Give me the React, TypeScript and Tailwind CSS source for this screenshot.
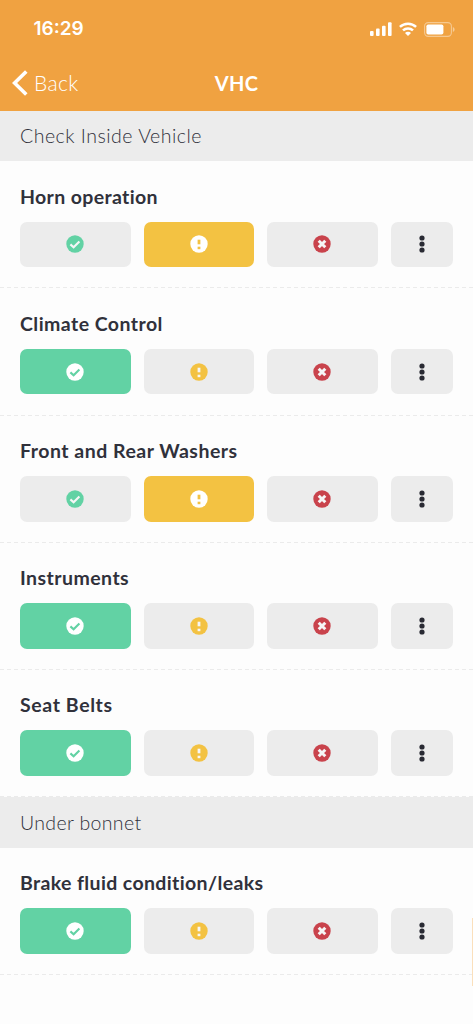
import React, { useState } from 'react';
import clsx from 'clsx';

type Status = 'ok' | 'advisory' | 'fail';

interface Check {
  name: string;
  status: Status;
  tracking: string;
}

interface Section {
  title: string;
  tracking: string;
  checks: Check[];
}

const sections: Section[] = [
  {
    title: 'Check Inside Vehicle',
    tracking: 'tracking-[0.5px]',
    checks: [
      { name: 'Horn operation', status: 'advisory', tracking: 'tracking-[0.35px]' },
      { name: 'Climate Control', status: 'ok', tracking: 'tracking-[0.45px]' },
      { name: 'Front and Rear Washers', status: 'advisory', tracking: 'tracking-[0.5px]' },
      { name: 'Instruments', status: 'ok', tracking: 'tracking-[0.45px]' },
      { name: 'Seat Belts', status: 'ok', tracking: 'tracking-[0.6px]' },
    ],
  },
  {
    title: 'Under bonnet',
    tracking: 'tracking-[0.35px]',
    checks: [{ name: 'Brake fluid condition/leaks', status: 'ok', tracking: 'tracking-[0.37px]' }],
  },
];

const options = [
  { id: 'ok' as Status, color: 'text-[#62d2a4]', active: 'bg-[#62d2a4]', mark: 'stroke-[#62d2a4]' },
  { id: 'advisory' as Status, color: 'text-[#f3c242]', active: 'bg-[#f3c242]', mark: 'stroke-[#f3c242]' },
  { id: 'fail' as Status, color: 'text-[#c9434c]', active: 'bg-[#c9434c]', mark: 'stroke-[#c9434c]' },
];

const marks: Record<Status, React.ReactNode> = {
  ok: <path d="M4.400 9.400 7.600 12.300 13.400 6.500" strokeWidth="2.1" />,
  advisory: (
    <>
      <path d="M9 4.700V9.300" strokeWidth="2.8" />
      <path d="M9 11.700V14.200" strokeWidth="2.8" />
    </>
  ),
  fail: <path d="M5.700 5.700 12.300 12.300M12.300 5.700 5.700 12.300" strokeWidth="3" />,
};

const StatusMark: React.FC<{ id: Status; className: string }> = ({ id, className }) => (
  <svg width="18" height="18" viewBox="0 0 18 18" fill="none">
    <circle cx="9" cy="9" r="8.7" fill="currentColor" />
    <g className={className}>{marks[id]}</g>
  </svg>
);

const StatusIcons: React.FC = () => (
  <div className="flex items-center gap-[7px] text-white">
    <svg width="22" height="14" viewBox="0 0 22 14" fill="currentColor">
      <rect x="0" y="9" width="3.6" height="5" rx="1" />
      <rect x="6" y="6.5" width="3.6" height="7.5" rx="1" />
      <rect x="12" y="3.7" width="3.6" height="10.3" rx="1" />
      <rect x="18" y="0.3" width="3.6" height="13.7" rx="1" />
    </svg>
    <svg width="18" height="14" viewBox="0 0 18 14" fill="none" stroke="currentColor" strokeWidth="2.5">
      <path d="M0.9 4.9a11.8 11.8 0 0 1 16.2 0" />
      <path d="M4 8.4a7.3 7.3 0 0 1 10 0" />
      <path d="M9 13.9 6 10.9a4.200 4.200 0 0 1 6 0Z" fill="currentColor" stroke="none" />
    </svg>
    <svg width="31" height="15" viewBox="0 0 31 15">
      <rect x="0.6" y="0.6" width="26.8" height="13.8" rx="3.6" fill="none" stroke="currentColor" strokeOpacity="0.42" strokeWidth="1.1" />
      <rect x="2.4" y="2.5" width="17" height="10" rx="1.8" fill="currentColor" />
      <path d="M28.9 5v5c1-.4 1.7-1.4 1.7-2.5S29.900 5.400 28.900 5Z" fill="currentColor" fillOpacity="0.45" />
    </svg>
  </div>
);

const CheckRow: React.FC<{ check: Check }> = ({ check }) => {
  const [status, setStatus] = useState<Status>(check.status);

  return (
    <div className="flex h-[127.2px] flex-col">
      <h3 className={clsx('px-5 pt-[21.5px] text-[19.5px] leading-[27px] font-bold whitespace-nowrap text-[#30313b]', check.tracking)}>
        {check.name}
      </h3>
      <div className="mt-[12px] flex h-[45.5px] gap-[12.7px] pr-[20.5px] pl-5">
        {options.map((opt) => {
          const selected = status === opt.id;
          return (
            <button
              key={opt.id}
              aria-label={opt.id}
              onClick={() => setStatus(opt.id)}
              className={clsx(
                'flex flex-1 items-center justify-center rounded-[7px]',
                selected ? [opt.active, 'text-white'] : ['bg-[#ececec]', opt.color],
              )}
            >
              <StatusMark id={opt.id} className={selected ? opt.mark : 'stroke-[#f6f6f6]'} />
            </button>
          );
        })}
        <button aria-label="More" className="flex w-[62px] items-center justify-center rounded-[7px] bg-[#ececec] text-[#292a33]">
          <svg width="6" height="18" viewBox="0 0 6 18" fill="currentColor">
            <circle cx="3" cy="3" r="2.6" />
            <circle cx="3" cy="9" r="2.6" />
            <circle cx="3" cy="15" r="2.6" />
          </svg>
        </button>
      </div>
      {/* Dashed divider */}
      <div className="mt-auto h-px bg-[repeating-linear-gradient(90deg,#ebebeb_0_4px,transparent_4px_7px)]" />
    </div>
  );
};

export default function App() {
  return (
    <div className="relative h-[1024px] w-[473px] overflow-hidden bg-[#fdfdfd] font-[Lato,sans-serif]">
      {/* Status bar and navigation */}
      <header className="h-[110.8px] bg-[#f0a241] text-white">
        <div className="flex h-14 items-center justify-between pt-[2px] pr-[18px] pl-[33.5px]">
          <span className="font-[Inter,sans-serif] text-[19px] leading-6 font-semibold">16:29</span>
          <StatusIcons />
        </div>
        <div className="grid h-[54px] grid-cols-3 items-center pl-3">
          <button className="flex items-center gap-[6px] text-[21px] leading-7 font-light tracking-[0.4px]">
            <svg width="16" height="26" viewBox="0 0 16 26" fill="none" stroke="currentColor" strokeWidth="3.6">
              <path d="M14.300 1.500 2.600 13l11.700 11.500" />
            </svg>
            Back
          </button>
          <h1 className="-ml-3 text-center text-[20px] leading-7 font-bold tracking-[0.3px]">VHC</h1>
        </div>
      </header>

      {sections.map((section) => (
        <section key={section.title}>
          <h2 className={clsx('flex h-[50.4px] items-center bg-[#ececec] px-5 text-[19.5px] font-light text-[#30313b]', section.tracking)}>
            {section.title}
          </h2>
          {section.checks.map((check) => (
            <CheckRow key={check.name} check={check} />
          ))}
        </section>
      ))}

      {/* Edge of the scroll indicator */}
      <div className="absolute top-[918px] right-0 h-[68px] w-px bg-[#fbe0bc]" />
    </div>
  );
}
